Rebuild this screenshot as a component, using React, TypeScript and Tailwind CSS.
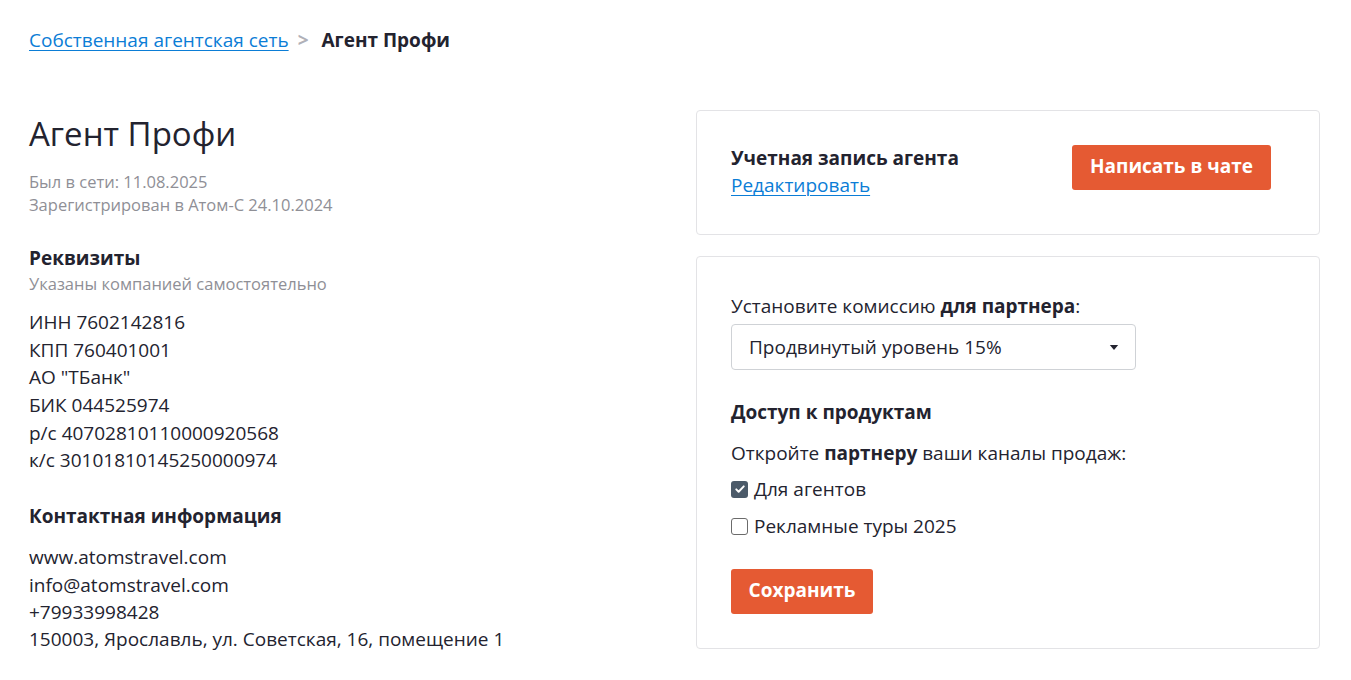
import { useState } from 'react'

const requisites = [
  'ИНН 7602142816',
  'КПП 760401001',
  'АО "ТБанк"',
  'БИК 044525974',
  'р/с 40702810110000920568',
  'к/с 30101810145250000974',
]

const contacts = [
  'www.atomstravel.com',
  'info@atomstravel.com',
  '+79933998428',
  '150003, Ярославль, ул. Советская, 16, помещение 1',
]

function Checkbox({ checked, onChange, label }: { checked: boolean; onChange: () => void; label: string }) {
  return (
    <label className="flex items-center gap-[6px] cursor-pointer" onClick={onChange}>
      {checked ? (
        <span className="flex h-[17px] w-[17px] items-center justify-center rounded-[3px] bg-[#4b5a69]">
          <svg viewBox="0 0 16 16" className="h-[12px] w-[12px]" fill="none" stroke="white" strokeWidth="2.6" strokeLinecap="round" strokeLinejoin="round">
            <path d="M3 8.5l3.2 3.2L13 4.5" />
          </svg>
        </span>
      ) : (
        <span className="h-[17px] w-[17px] rounded-[3px] border border-[#6b6b6b] bg-white" />
      )}
      <span>{label}</span>
    </label>
  )
}

export default function App() {
  const [agents, setAgents] = useState(true)
  const [tours, setTours] = useState(false)

  return (
    <div
      className="min-h-[680px] bg-white pl-[29px] pr-[31px] pt-[27px] text-[19px] leading-[27.6px] text-[#23232f]"
      style={{ fontFamily: '"Open Sans", "Noto Sans", sans-serif' }}
    >
      <div className="flex items-center">
        <a href="#" className="text-[#0b7dd6] underline underline-offset-[3px] decoration-1">Собственная агентская сеть</a>
        <span className="ml-[9px] mr-[13px] font-bold text-[#b0b0b8]">&gt;</span>
        <span className="font-bold">Агент Профи</span>
      </div>

      <div className="mt-[55px] flex">
        <div className="flex-1">
          <h1 className="mt-[5px] text-[33px] leading-[38px] font-normal">Агент Профи</h1>
          <div className="mt-[17px] text-[16.5px] leading-[23px] text-[#8f8f96]">
            <div>Был в сети: 11.08.2025</div>
            <div>Зарегистрирован в Атом-С 24.10.2024</div>
          </div>

          <div className="mt-[29px] font-bold">Реквизиты</div>
          <div className="text-[16.5px] leading-[23px] text-[#8f8f96]">Указаны компанией самостоятельно</div>
          <div className="mt-[14px]">
            {requisites.map((r) => (
              <div key={r}>{r}</div>
            ))}
          </div>

          <div className="mt-[28px] font-bold">Контактная информация</div>
          <div className="mt-[14px] leading-[27.3px]">
            {contacts.map((c) => (
              <div key={c}>{c}</div>
            ))}
          </div>
        </div>

        <div className="w-[624px] shrink-0">
          <div className="flex items-center rounded-[4px] border border-[#e3e3e6] px-[34px] py-[34px]">
            <div className="flex-1">
              <div className="font-bold">Учетная запись агента</div>
              <a href="#" className="text-[#0b7dd6] underline underline-offset-[3px] decoration-1">Редактировать</a>
            </div>
            <button className="mr-[14px] mb-[10px] h-[45px] w-[199px] rounded-[3px] bg-[#e55a33] font-bold text-white">
              Написать в чате
            </button>
          </div>

          <div className="mt-[21px] rounded-[4px] border border-[#e3e3e6] px-[34px] pt-[36px] pb-[34px]">
            <div>
              Установите комиссию <b>для партнера</b>:
            </div>
            <div className="mt-[4px] flex h-[46px] w-[405px] items-center justify-between rounded-[4px] border border-[#cfd2d6] pl-[17px] pr-[16px]">
              <span>Продвинутый уровень 15%</span>
              <svg viewBox="0 0 10 6" className="h-[5px] w-[10px]" fill="#23232f">
                <path d="M0 0h10L5 6z" />
              </svg>
            </div>

            <div className="mt-[29px] font-bold">Доступ к продуктам</div>
            <div className="mt-[13px]">
              Откройте <b>партнеру</b> ваши каналы продаж:
            </div>
            <div className="mt-[8px] flex flex-col gap-[10px]">
              <Checkbox checked={agents} onChange={() => setAgents(!agents)} label="Для агентов" />
              <Checkbox checked={tours} onChange={() => setTours(!tours)} label="Рекламные туры 2025" />
            </div>

            <button className="mt-[28px] h-[45px] w-[142px] rounded-[3px] bg-[#e55a33] font-bold text-white">
              Сохранить
            </button>
          </div>
        </div>
      </div>
    </div>
  )
}
